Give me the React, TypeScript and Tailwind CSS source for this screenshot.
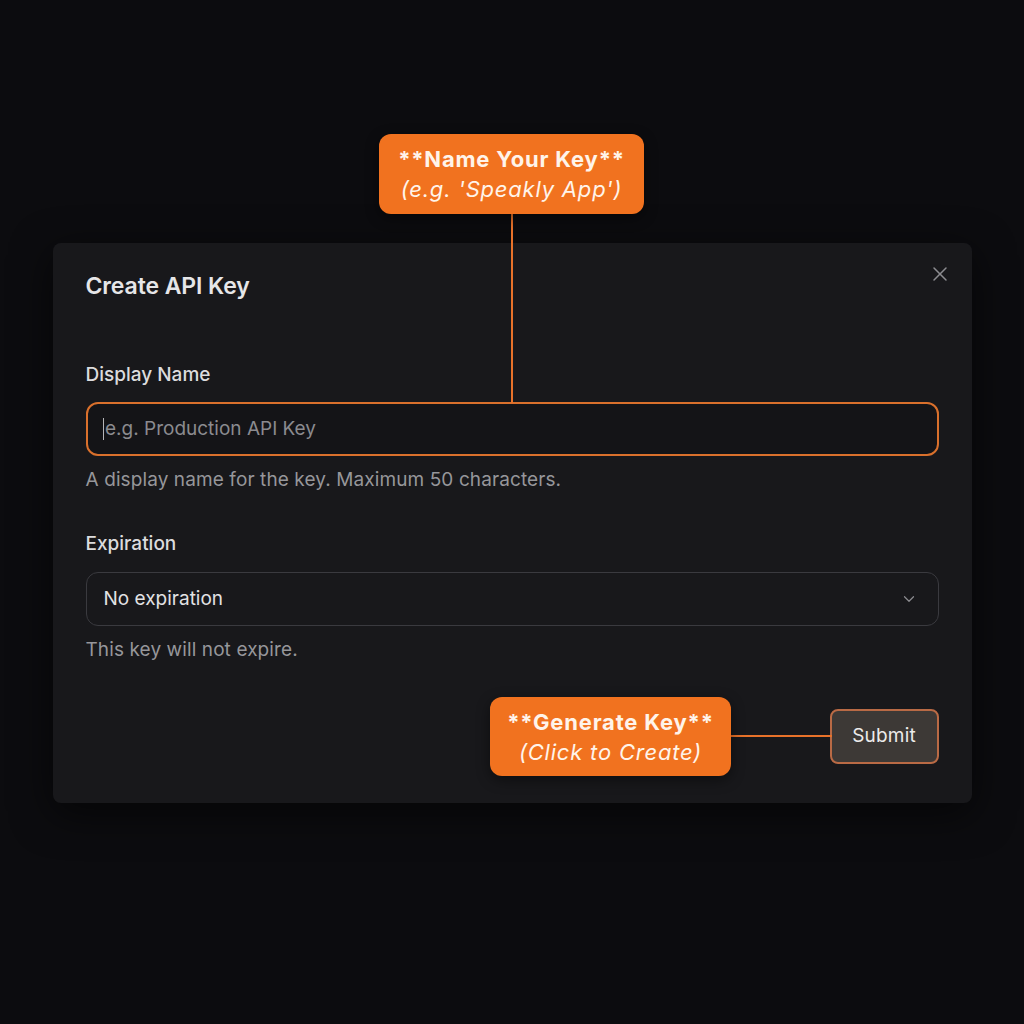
import { X, ChevronDown } from 'lucide-react'

function Callout({ title, sub, className }: { title: string; sub: string; className: string }) {
  return (
    <div
      className={`absolute flex flex-col items-center justify-center rounded-xl bg-[#f1721f] text-[#fff4ea] shadow-[0_4px_14px_rgba(0,0,0,0.45)] ${className}`}
    >
      <div className="text-[22px] font-bold leading-[30px] tracking-[0.8px]">{title}</div>
      <div className="text-[22px] italic leading-[30px] tracking-[0.8px]">{sub}</div>
    </div>
  )
}

export default function App() {
  return (
    <div className="relative h-[1024px] w-[1024px] overflow-hidden bg-[#0c0c0f] font-['Inter',_'Noto_Sans',_sans-serif]">
      <div className="pt-[243px]">
        <div className="relative mx-auto w-[919px] rounded-lg bg-[#18181b] px-[33px] pb-[39px] pt-[29px] shadow-[0_10px_40px_rgba(0,0,0,0.6)]">
          <button className="absolute right-[20px] top-[19px] text-[#8c8c90]">
            <X size={24} strokeWidth={1.5} />
          </button>
          <h2 className="text-[23px] font-semibold leading-[28px] tracking-[-0.1px] text-[#e6e6e8]">Create API Key</h2>

          <div className="mt-[63px]">
            <label className="block text-[19px] font-medium leading-[24px] text-[#dcdcde]">Display Name</label>
            <div className="mt-[15px] flex h-[54px] items-center rounded-xl border-2 border-[#d9702c] bg-[#141417] px-[15px]">
              <span className="mr-[1px] h-[22px] w-[1.5px] bg-[#b5b5b8]" />
              <span className="text-[19px] text-[#8b8b8f]">e.g. Production API Key</span>
            </div>
            <p className="mt-[12px] text-[19px] leading-[24px] tracking-[0.1px] text-[#96969a]">
              A display name for the key. Maximum 50 characters.
            </p>
          </div>

          <div className="mt-[40px]">
            <label className="block text-[19px] font-medium leading-[24px] text-[#dcdcde]">Expiration</label>
            <div className="mt-[16px] flex h-[54px] items-center justify-between rounded-xl border border-[#3a3a3f] bg-[#18181b] pl-[17px] pr-[20px]">
              <span className="text-[19px] text-[#e2e2e4]">No expiration</span>
              <ChevronDown size={18} strokeWidth={1.6} className="text-[#8c8c90]" />
            </div>
            <p className="mt-[12px] text-[19px] leading-[24px] tracking-[0.1px] text-[#96969a]">This key will not expire.</p>
          </div>

          <div className="mt-[47px] flex justify-end">
            <button className="h-[55px] w-[109px] rounded-lg border-2 border-[#b96a45] bg-[#3d3936] text-[19px] tracking-[0.2px] text-[#ecebea]">
              Submit
            </button>
          </div>
        </div>
      </div>

      <div className="absolute left-[511px] top-[213px] h-[190px] w-[2px] bg-[#e8722a]" />
      <Callout className="left-[379px] top-[134px] h-[80px] w-[265px]" title="**Name Your Key**" sub="(e.g. 'Speakly App')" />

      <div className="absolute left-[730px] top-[735px] h-[2px] w-[102px] bg-[#e8722a]" />
      <Callout className="left-[490px] top-[697px] h-[79px] w-[241px]" title="**Generate Key**" sub="(Click to Create)" />
    </div>
  )
}
